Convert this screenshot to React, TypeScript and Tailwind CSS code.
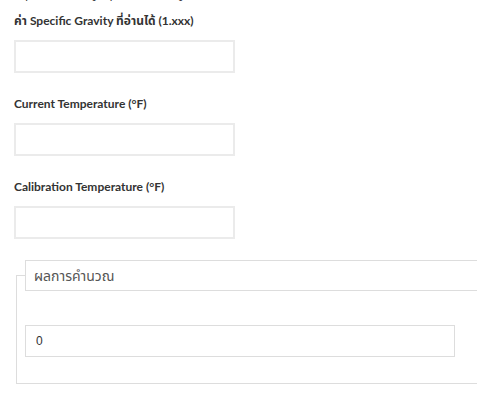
import React, { useState } from 'react';

const labelFont = { fontFamily: '"Lato", "Noto Sans", "Noto Sans Thai", "DejaVu Sans", sans-serif' };
const valueFont = { fontFamily: '"Liberation Sans", Arial, sans-serif' };

type FieldProps = {
  label: string;
  value: string;
  onChange: (v: string) => void;
};

const Field: React.FC<FieldProps> = ({ label, value, onChange }) => (
  <div className="mb-[21px]">
    <label className="block h-5 leading-5 mb-[9px] text-[12px] font-bold text-[#333]" style={labelFont}>
      {label}
    </label>
    <input
      type="text"
      value={value}
      onChange={e => onChange(e.target.value)}
      className="block w-[221px] h-[33px] px-2 border-2 border-[#ebebeb] bg-white text-[12px] outline-none"
      style={valueFont}
    />
  </div>
);

export default function App() {
  const [form, setForm] = useState({ sg: '', current: '', calibration: '' });

  const set = (key: keyof typeof form) => (v: string) => setForm(prev => ({ ...prev, [key]: v }));

  return (
    <div className="w-[477px] h-[400px] overflow-hidden bg-white">
      {/* tail of the instruction line cut off above */}
      <div className="h-[11px] overflow-hidden relative">
        <p className="absolute left-[14px] bottom-[8px] text-[13px] leading-5 text-[#333] whitespace-nowrap" style={labelFont}>
          กรุณากรอกข้อมูลทุกช่องให้ครบถู้
        </p>
      </div>

      <div className="pl-[14px]">
        <Field label="ค่า Specific Gravity ที่อ่านได้ (1.xxx)" value={form.sg} onChange={set('sg')} />
        <Field label="Current Temperature (°F)" value={form.current} onChange={set('current')} />
        <Field label="Calibration Temperature (°F)" value={form.calibration} onChange={set('calibration')} />
      </div>

      <fieldset className="ml-[16px] w-[520px] border border-[#dddddd] px-2 pb-[26px]">
        <legend className="w-[500px] h-[31px] border border-[#dddddd] px-[8px] text-[14px] font-normal leading-[29px] text-[#555]" style={labelFont}>
          ผลการคำนวณ
        </legend>
        <input
          type="text"
          readOnly
          value="0"
          className="block mt-[34px] w-[430px] h-[32px] px-[10px] border border-[#dddddd] bg-white text-[12px] text-[#333] outline-none"
          style={valueFont}
        />
      </fieldset>
    </div>
  );
}
